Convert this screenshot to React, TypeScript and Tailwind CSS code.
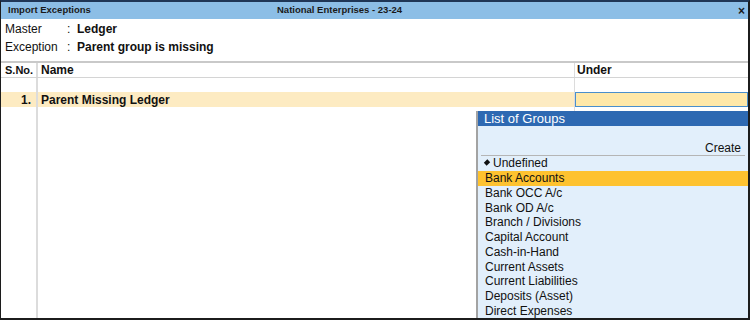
import React from "react";

const groups = [
  "Bank Accounts",
  "Bank OCC A/c",
  "Bank OD A/c",
  "Branch / Divisions",
  "Capital Account",
  "Cash-in-Hand",
  "Current Assets",
  "Current Liabilities",
  "Deposits (Asset)",
  "Direct Expenses",
];

export default function App() {
  return (
    <div className="relative w-[750px] h-[320px] bg-white border-l border-r-2 border-t-2 border-b-2 border-l-[#1c1c1c] border-r-[#1c1c1c] border-b-[#1c1c1c] border-t-[#1f3656] overflow-hidden font-['Liberation_Sans',Arial,sans-serif] text-[#111] flex flex-col">
      {/* Title bar */}
      <div className="h-[17px] bg-[#8cbee6] flex items-center text-[9.5px] font-bold text-[#1a1a1a] shrink-0">
        <div className="w-[276px] pl-[7px]">Import Exceptions</div>
        <div>National Enterprises - 23-24</div>
        <div className="flex-1" />
        <div className="pr-[3px] text-[12px] leading-none">×</div>
      </div>

      {/* Info */}
      <div className="h-[42px] shrink-0 pt-[1px] text-[12px]">
        <div className="h-[18px] flex items-center">
          <div className="w-[66px] pl-[4px]">Master</div>
          <div className="w-[10px]">:</div>
          <div className="font-bold">Ledger</div>
        </div>
        <div className="h-[18px] flex items-center">
          <div className="w-[66px] pl-[4px]">Exception</div>
          <div className="w-[10px]">:</div>
          <div className="font-bold">Parent group is missing</div>
        </div>
      </div>

      <div className="h-[2px] bg-[#c9c9c9] shrink-0" />

      {/* Header row */}
      <div className="h-[15px] flex shrink-0 border-b border-[#d4d4d4] text-[12px] font-bold">
        <div className="w-[35px] pl-[4px] text-[11px] flex items-center">S.No.</div>
        <div className="w-[2px] bg-[#dcdcdc]" />
        <div className="w-[536px] pl-[3px] flex items-center">Name</div>
        <div className="w-[1px] bg-[#dcdcdc]" />
        <div className="flex-1 pl-[2px] flex items-center">Under</div>
      </div>

      {/* Empty row */}
      <div className="h-[14px] flex shrink-0">
        <div className="w-[35px]" />
        <div className="w-[2px] bg-[#dcdcdc]" />
        <div className="w-[536px]" />
        <div className="w-[1px] bg-[#dcdcdc]" />
        <div className="flex-1" />
      </div>

      {/* Data row */}
      <div className="h-[15px] flex shrink-0 text-[12px] font-bold">
        <div className="w-[35px] bg-[#fdebc2] pr-[5px] flex items-center justify-end">1.</div>
        <div className="w-[2px] bg-[#dcdcdc]" />
        <div className="w-[536px] bg-[#fdebc2] pl-[3px] flex items-center">Parent Missing Ledger</div>
        <div className="w-[1px] bg-[#dcdcdc]" />
        <div className="flex-1 bg-[#ffe8a8] border border-[#4a8fcc]" />
      </div>

      {/* Filler */}
      <div className="flex-1 flex">
        <div className="w-[35px]" />
        <div className="w-[2px] bg-[#dcdcdc]" />
        <div className="w-[536px]" />
        <div className="w-[1px] bg-[#dcdcdc]" />
        <div className="flex-1" />
      </div>

      {/* Popup: List of Groups */}
      <div className="absolute left-[475px] top-[109px] right-0 bottom-0 border-l-2 border-[#a3a3a3] bg-[#e2effb] flex flex-col">
        <div className="h-[15px] bg-[#2e69b2] text-white text-[13px] pl-[6px] flex items-center shrink-0">
          List of Groups
        </div>
        <div className="h-[15px] shrink-0" />
        <div className="h-[14px] text-[12px] flex items-center justify-end pr-[7px] shrink-0">Create</div>
        <div className="h-[1px] bg-[#b5b5b5] mx-[3px] shrink-0" />
        <div className="flex flex-col text-[12px]">
          <div className="h-[14.75px] flex items-center pl-[7px]">
            <span className="inline-block w-[4px] h-[5px] bg-[#111] rotate-45 mr-[4px] mb-[2px]" />
            Undefined
          </div>
          {groups.map((g, i) => (
            <div
              key={g}
              className={
                i === 0
                  ? "h-[14.75px] flex items-center pl-[7px] bg-[#fec22f]"
                  : "h-[14.75px] flex items-center pl-[7px]"
              }
            >
              {g}
            </div>
          ))}
        </div>
      </div>
    </div>
  );
}
